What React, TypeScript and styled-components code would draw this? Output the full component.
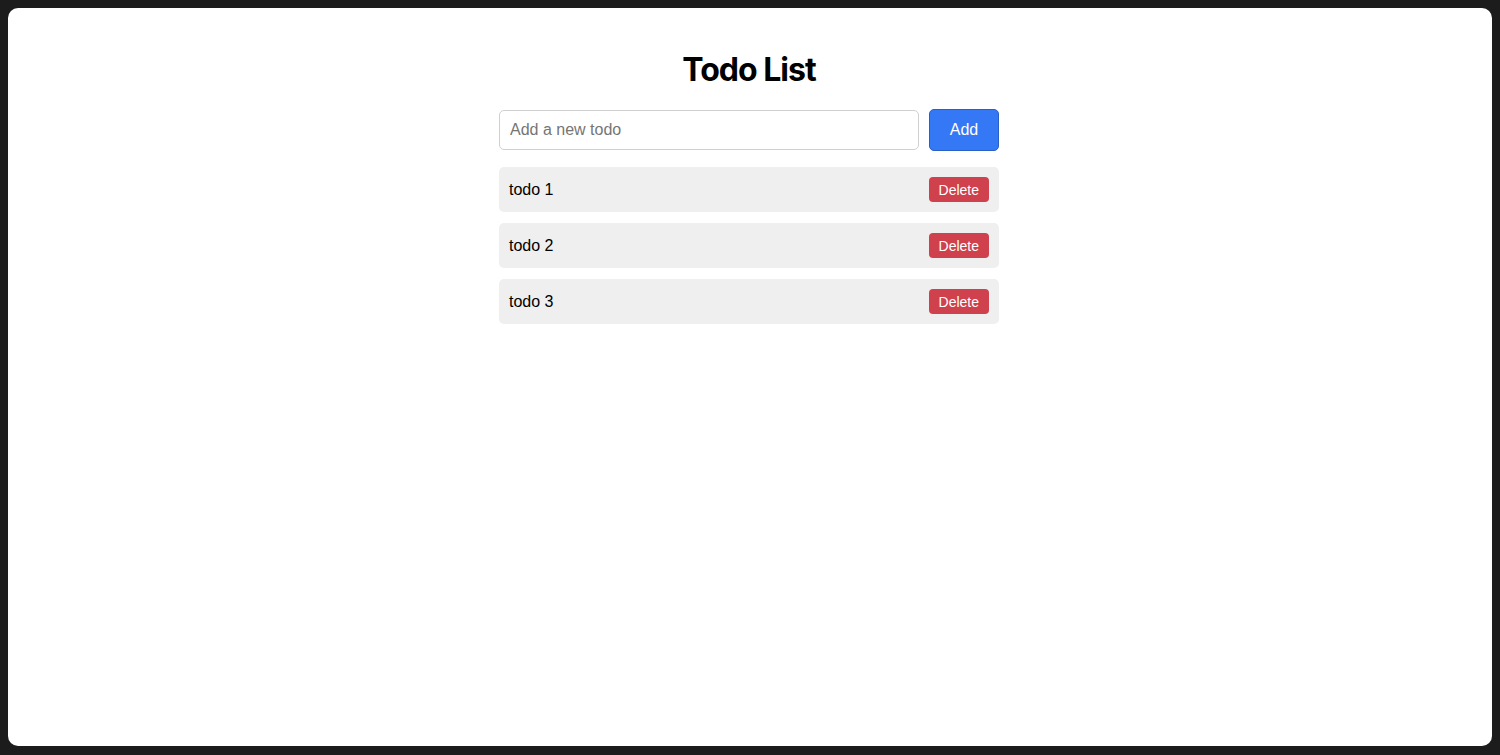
import { FC, useState } from "react";
import styled, { createGlobalStyle } from "styled-components";

const GlobalStyle = createGlobalStyle`
  html, body {
    margin: 0;
    padding: 0;
    background: #1c1c1c;
  }
  body {
    font-family: "Liberation Sans", Arial, sans-serif;
  }
`;

const Frame = styled.div`
  box-sizing: border-box;
  margin: 8px 8px 9px 8px;
  height: 738px;
  background: #ffffff;
  border-radius: 10px;
  padding-top: 42px;
  display: flex;
  justify-content: center;
`;

const Wrapper = styled.div`
  width: 500px;
  margin-left: -2px;
  display: flex;
  flex-direction: column;
`;

const Title = styled.h1`
  margin: 0 0 20px 0;
  text-align: center;
  font-family: Inter, "Liberation Sans", sans-serif;
  font-weight: 700;
  font-size: 32px;
  line-height: 39px;
  letter-spacing: -1px;
  color: #000;
`;

const Form = styled.form`
  display: flex;
  align-items: center;
  gap: 10px;
  margin-bottom: 16px;
`;

const Input = styled.input`
  box-sizing: border-box;
  flex: 1;
  height: 40px;
  padding: 0 10px;
  border: 1px solid #d0d0d0;
  border-radius: 5px;
  font-family: "Liberation Sans", Arial, sans-serif;
  font-size: 16px;
  color: #000;
  outline: none;

  &::placeholder {
    color: #757575;
  }
`;

const AddButton = styled.button`
  box-sizing: border-box;
  width: 70px;
  height: 42px;
  background: #3478f6;
  border: 1px solid #2a5fc4;
  border-radius: 5px;
  color: #ffffff;
  font-family: "Liberation Sans", Arial, sans-serif;
  font-size: 16px;
  cursor: pointer;
`;

const List = styled.ul`
  list-style: none;
  margin: 0;
  padding: 0;
  display: flex;
  flex-direction: column;
  gap: 11px;
`;

const Item = styled.li`
  box-sizing: border-box;
  height: 45px;
  padding: 0 10px;
  background: #efefef;
  border-radius: 5px;
  display: flex;
  align-items: center;
  justify-content: space-between;
  font-size: 16px;
  color: #000;
`;

const DeleteButton = styled.button`
  box-sizing: border-box;
  height: 25px;
  padding: 0 10px;
  background: #cf414c;
  border: none;
  border-radius: 4px;
  color: #ffffff;
  font-family: "Liberation Sans", Arial, sans-serif;
  font-size: 14px;
  cursor: pointer;
`;

const App: FC = () => {
  const [todos, setTodos] = useState<string[]>(["todo 1", "todo 2", "todo 3"]);
  const [text, setText] = useState("");

  const handleAdd = (e: React.FormEvent) => {
    e.preventDefault();
    if (!text.trim()) return;
    setTodos([...todos, text.trim()]);
    setText("");
  };

  const handleDelete = (index: number) => {
    setTodos(todos.filter((_, i) => i !== index));
  };

  return (
    <>
      <GlobalStyle />
      <Frame>
        <Wrapper>
          <Title>Todo List</Title>
          <Form onSubmit={handleAdd}>
            <Input
              placeholder="Add a new todo"
              value={text}
              onChange={(e) => setText(e.target.value)}
            />
            <AddButton type="submit">Add</AddButton>
          </Form>
          <List>
            {todos.map((todo, i) => (
              <Item key={i}>
                <span>{todo}</span>
                <DeleteButton onClick={() => handleDelete(i)}>Delete</DeleteButton>
              </Item>
            ))}
          </List>
        </Wrapper>
      </Frame>
    </>
  );
};

export default App;
